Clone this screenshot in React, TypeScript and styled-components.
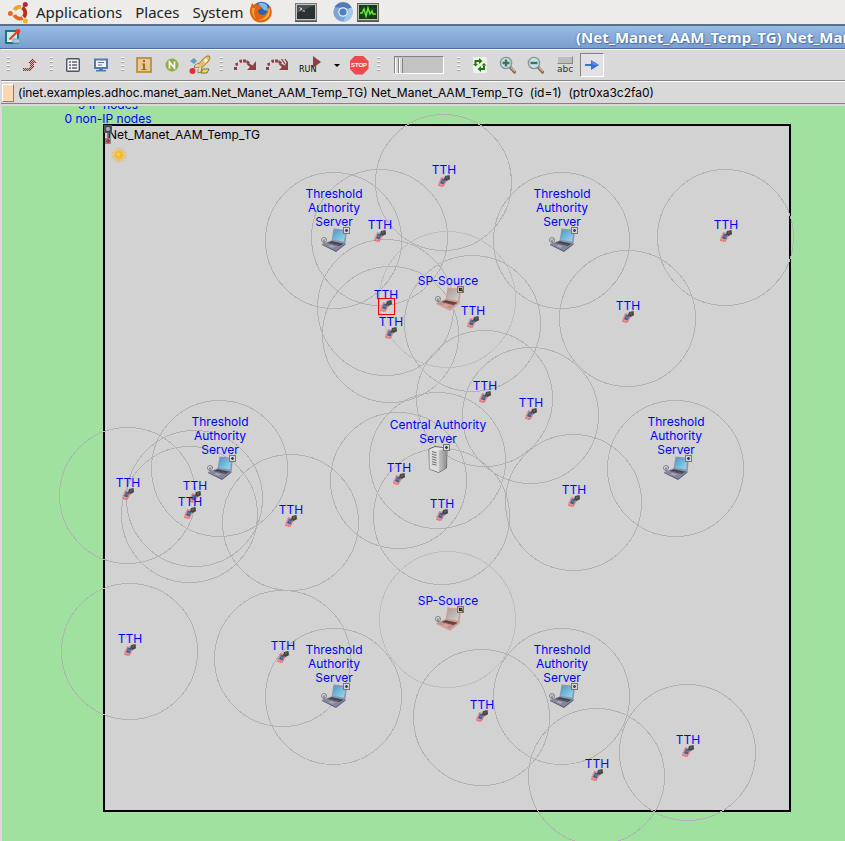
import React from "react";
import styled, { createGlobalStyle } from "styled-components";

const GlobalStyle = createGlobalStyle`
  * { box-sizing: border-box; }
  body { margin: 0; background: #d9d9d9; }
  button { font: inherit; color: inherit; border: 0; background: none; padding: 0; margin: 0; }
  svg { display: block; flex: none; }
`;

const Page = styled.div`
  min-height: 100vh;
  display: flex;
  flex-direction: column;
  font-family: Inter, "Liberation Sans", Arial, sans-serif;
  font-size: 12px;
  color: #000;
  overflow: hidden;
`;

const DesktopPanel = styled.nav`
  height: 24px;
  display: flex;
  align-items: center;
  padding-left: 7px;
  background: #edecea;
  font-family: "Noto Sans", sans-serif;
  font-size: 15px;
  line-height: 24px;
`;

const MenuButton = styled.button`
  display: flex;
  align-items: center;
  gap: 6px;
  margin-right: 13px;
  color: #222;
`;

const Launcher = styled.button<{ $gap: number }>`
  margin-left: ${(p) => p.$gap}px;
`;

const TitleBar = styled.header`
  height: 25px;
  display: flex;
  align-items: center;
  padding-left: 5px;
  border-top: 2px solid #5b7088;
  border-bottom: 1px solid #446ea5;
  background: linear-gradient(#98bae5, #799fce);
  overflow: hidden;
`;

const Title = styled.h1`
  flex: 1;
  margin: 0 0 0 555px;
  font-family: "Noto Sans", sans-serif;
  font-size: 15px;
  line-height: 22px;
  font-weight: 700;
  color: #fff;
  white-space: nowrap;
  text-shadow: 0 0 2px #3a649b, 1px 1px 1px #4d77ad;
`;

const Toolbar = styled.div`
  height: 32px;
  display: flex;
  align-items: center;
  margin-left: 1px;
  background: #d9d9d9;
  border-top: 1px solid #fff;
  border-bottom: 1px solid #828282;
`;

const Grip = styled.span`
  width: 15px;
  height: 16px;
  flex: none;
  display: flex;
  justify-content: center;
  &::before {
    content: "";
    width: 3px;
    background: repeating-linear-gradient(#fff 0 1px, #a3a3a3 1px 2px, #d9d9d9 2px 4px);
  }
`;

const ToolButton = styled.button<{ $width?: number; $active?: boolean }>`
  width: ${(p) => p.$width ?? 28}px;
  height: 24px;
  flex: none;
  display: flex;
  align-items: center;
  justify-content: center;
  border: ${(p) => (p.$active ? "1px solid" : "0")};
  border-color: #828282 #fff #fff #828282;
  background: ${(p) => (p.$active ? "#e1e1e3" : "none")};
`;

const Speed = styled.input`
  appearance: none;
  width: 50px;
  height: 18px;
  margin: 0 7px 0 8px;
  flex: none;
  background: #c3c3c3;
  border: 1px solid;
  border-color: #828282 #fff #fff #828282;
  &::-webkit-slider-thumb {
    appearance: none;
    width: 8px;
    height: 15px;
    background: linear-gradient(90deg, #fff 0 1px, #d9d9d9 1px 3px, #828282 3px 4px, #fff 4px 5px, #d9d9d9 5px 7px, #828282 7px);
  }
`;

const InfoBar = styled.div`
  height: 23px;
  display: flex;
  align-items: center;
  gap: 4px;
  margin-left: 1px;
  padding-left: 1px;
  background: #d9d9d9;
  border-top: 1px solid #fff;
  border-bottom: 1px solid #828282;
  line-height: 14px;
  white-space: pre;
`;

const Swatch = styled.button`
  width: 12px;
  height: 18px;
  flex: none;
  background: #ffd8b1;
  border: 1px solid;
  border-color: #fff #8c7b6a #8c7b6a #fff;
`;

const Canvas = styled.main`
  position: relative;
  flex: 1;
  min-height: 735px;
  margin: 2px 0 0 2px;
  background: #a0e1a0;
  overflow: hidden;
`;

const NodeCounts = styled.div`
  position: absolute;
  left: 46px;
  top: -8px;
  width: 120px;
  line-height: 14px;
  text-align: center;
  color: #00f;
`;

const Playground = styled.section`
  position: absolute;
  left: 101px;
  top: 18px;
  width: 688px;
  height: 688px;
  display: flex;
  flex-direction: column;
  gap: 5px;
  padding: 2px 3px;
  border: 2px solid #000;
  background: #d2d2d2;
  line-height: 14px;
`;

const Notifier = styled.div`
  padding-left: 3px;
`;

const ModuleMarks = styled.div`
  position: absolute;
  left: 101px;
  top: 18px;
`;

const Ranges = styled.svg`
  position: absolute;
  left: 0;
  top: 0;
  width: 100%;
  height: 100%;
  fill: none;
  stroke: #b2b2b2;
  shape-rendering: crispEdges;
`;

const NodeBox = styled.div<{ $x: number; $y: number }>`
  position: absolute;
  left: ${(p) => p.$x - 62}px;
  top: ${(p) => p.$y - 106}px;
  width: 120px;
  height: 0;
  display: flex;
  flex-direction: column;
  justify-content: flex-end;
  align-items: center;
`;

const NodeLabel = styled.span`
  flex: none;
  margin-bottom: -3px;
  line-height: 14px;
  text-align: center;
  color: #00f;
  white-space: pre;
`;

const Selection = styled.div`
  position: absolute;
  left: 376px;
  top: 192px;
  width: 17px;
  height: 17px;
  border: 1px solid #f00;
`;

type Kind = "tth" | "authority" | "source" | "central";
type NetNode = { x: number; y: number; kind: Kind };

const nodes: NetNode[] = [
  { x: 444, y: 182, kind: "tth" },
  { x: 380, y: 237, kind: "tth" },
  { x: 726, y: 237, kind: "tth" },
  { x: 386, y: 307, kind: "tth" },
  { x: 391, y: 334, kind: "tth" },
  { x: 473, y: 323, kind: "tth" },
  { x: 628, y: 318, kind: "tth" },
  { x: 485, y: 398, kind: "tth" },
  { x: 531, y: 415, kind: "tth" },
  { x: 399, y: 480, kind: "tth" },
  { x: 442, y: 516, kind: "tth" },
  { x: 574, y: 502, kind: "tth" },
  { x: 128, y: 495, kind: "tth" },
  { x: 195, y: 498, kind: "tth" },
  { x: 190, y: 514, kind: "tth" },
  { x: 291, y: 522, kind: "tth" },
  { x: 130, y: 651, kind: "tth" },
  { x: 283, y: 658, kind: "tth" },
  { x: 482, y: 717, kind: "tth" },
  { x: 688, y: 752, kind: "tth" },
  { x: 597, y: 776, kind: "tth" },
  { x: 334, y: 240, kind: "authority" },
  { x: 562, y: 240, kind: "authority" },
  { x: 220, y: 468, kind: "authority" },
  { x: 676, y: 468, kind: "authority" },
  { x: 334, y: 696, kind: "authority" },
  { x: 562, y: 696, kind: "authority" },
  { x: 448, y: 299, kind: "source" },
  { x: 448, y: 619, kind: "source" },
  { x: 438, y: 460, kind: "central" },
];

const labels: Record<Kind, string> = {
  tth: "TTH",
  authority: "Threshold\nAuthority\nServer",
  source: "SP-Source",
  central: "Central Authority\nServer",
};

const halfHeight: Record<Kind, number> = { tth: 8, authority: 14, source: 14, central: 17 };

const Phone = () => (
  <svg width="14" height="16" viewBox="0 0 14 16">
    <path d="M4.5 3 9.5 4 9.5 7 6 13 1 12 1.5 9.5Z" fill="#dd9a9c" />
    <path d="M1.5 11 6 12.5 9 7" stroke="#f2666a" strokeWidth="1.4" strokeDasharray="1.4 1" fill="none" />
    <path d="M4.5 3.5 1.5 10" stroke="#f2666a" strokeDasharray="1.4 1" />
    <path d="M4.8 4.5 8.5 5.5 6.5 10.5 3 9.2Z" fill="#416591" />
    <path d="M4.5 6.5 6.5 7.5" stroke="#6d91b8" />
    <path d="M8 2 12.5 1 13 5.2 9.5 7 7 5.5Z" fill="#444548" />
    <path d="M9 2.5H11V4.5H9Z" fill="#5f6063" />
  </svg>
);

const Badge = ({ x, y, dark }: { x: number; y: number; dark?: boolean }) => (
  <g shapeRendering="crispEdges">
    <rect x={x} y={y} width="7" height="7" fill="#777" />
    <rect x={x + 1} y={y + 1} width="5" height="5" fill={dark ? "#b9b99a" : "#d4d4d4"} />
    <rect x={x + 2} y={y + 2} width="3" height="3" fill={dark ? "#24240c" : "#9a9ab0"} />
    {dark ? (
      <path d={`M${x + 3} ${y + 3}h3v3h-1v-2h-2z`} fill="#6d6d20" />
    ) : (
      <path d={`M${x + 3} ${y + 2}h1v1h1v1h-1v1h-1v-1h-1v-1h1z`} fill="#3c3c6e" />
    )}
  </g>
);

const Laptop = ({ pink }: { pink?: boolean }) => {
  const id = pink ? "screenPink" : "screenBlue";
  return (
    <svg width="36" height="28" viewBox="-4 0 36 28">
      <defs>
        <linearGradient id={id} x1="0" y1="0" x2="1" y2="1">
          <stop offset="0" stopColor={pink ? "#ab9d9b" : "#439bc8"} />
          <stop offset="1" stopColor={pink ? "#d5d0cb" : "#a4daf0"} />
        </linearGradient>
      </defs>
      <path d="M13.5 2.5 27 4 25.5 17.5 11.5 15Z" fill={pink ? "#d19a90" : "#8b95b3"} />
      <path d="M14.5 4 25.5 5.2 24 15.5 12.7 13.7Z" fill={`url(#${id})`} />
      <path d="M2 18 11.5 14.5 25.5 17.5 16 24.5Z" fill={pink ? "#c4938b" : "#84869a"} />
      <path d="M7.5 17 11.5 15.3 23.5 17.7 19.5 20Z" fill={pink ? "#54403e" : "#41414d"} />
      <path d="M9 16.9 20.5 19" stroke={pink ? "#7c5c58" : "#686a7c"} strokeWidth=".6" />
      <path d="M8 20.2 11 19 15 20.2 12.5 21.8Z" fill={pink ? "#d8aaa4" : "#a7a9bb"} />
      <path d="M2 18V19L16 26 25.5 18.5V17.3L16 24.5Z" fill={pink ? "#d5a29b" : "#5b5d78"} />
      <circle cx="4" cy="14" r="2.5" fill="#dcdcdc" stroke="#777" strokeWidth=".9" />
      <path d="M3 13.7 4 14.5 5.5 13.3M4 14.5V16.5" stroke="#555" strokeWidth=".8" fill="none" />
      <Badge x={23} y={1} dark={pink} />
    </svg>
  );
};

const Tower = () => (
  <svg width="28" height="34" viewBox="0 0 28 34">
    <defs>
      <linearGradient id="tower">
        <stop offset="0" stopColor="#c4c4c4" />
        <stop offset="1" stopColor="#909090" />
      </linearGradient>
    </defs>
    <path d="M5 6 11 3.5 23 5 22.5 25 14.5 29.5 5.5 26Z" fill="#e4e4e4" stroke="#666" />
    <path d="M14.5 7.5 22.5 5.5 22 25 14.5 29Z" fill="url(#tower)" />
    <path d="M5.5 6.5 14.5 8V29L5.5 26Z" fill="#dcdcdc" />
    <path
      d="M8 8.5 12.5 10M8 11 12.5 12.5M8 13.5 12.5 15M8 16 12.5 17.5M8 18.5 12.5 20M8 21 12.5 22"
      stroke="#777"
      strokeWidth="1.2"
    />
    <Badge x={19} y={1} />
  </svg>
);

const glyphs: Record<Kind, React.ReactNode> = {
  tth: <Phone />,
  authority: <Laptop />,
  source: <Laptop pink />,
  central: <Tower />,
};

const Sun = () => (
  <svg width="16" height="16" viewBox="0 0 16 16">
    <path
      d="M8 0V16M0 8H16M2.3 2.3 13.7 13.7M13.7 2.3 2.3 13.7M5 .8 11 15.2M11 .8 5 15.2M.8 5 15.2 11M15.2 5 .8 11"
      stroke="#eeb640"
      strokeWidth=".9"
    />
    <circle cx="8" cy="8" r="4.6" fill="#d9c79a" />
    <circle cx="8" cy="8" r="3.8" fill="#ffb90c" />
    <circle cx="7.5" cy="7.5" r="1.8" fill="#ffd548" />
  </svg>
);

const Ubuntu = () => (
  <svg width="23" height="23" viewBox="0 0 23 23">
    <g fill="none" strokeWidth="3.8">
      <path d="M7.4 9A6 6 0 0 1 14 6.2" stroke="#f0a02c" />
      <path d="M15.2 6.6A6 6 0 0 1 16.6 16" stroke="#b83216" />
      <path d="M15.6 16.8A6 6 0 0 1 7.3 14" stroke="#e8651e" />
    </g>
    <circle cx="18.3" cy="3.6" r="2.5" fill="#b02a3c" />
    <circle cx="3.4" cy="12.4" r="2.5" fill="#ea6a25" />
    <circle cx="18.4" cy="20" r="2.5" fill="#f3b12d" />
  </svg>
);

const Firefox = () => (
  <svg width="24" height="24" viewBox="0 0 24 24">
    <circle cx="12.5" cy="11.5" r="9.8" fill="#2c63ae" />
    <path d="M9 4Q13 1 18 5L19 11 15 10Z" fill="#80b8e6" />
    <path
      d="M3 3 5 5Q9 3 11 6L13 8 9 10Q9 15 14 15 18 14 19 9L21 6Q25 14 20 19 14 25 6 21 0 16 1 9Z"
      fill="#e2660f"
    />
    <path d="M20 7Q22 12 19 17 15 21 9 20 16 19 19 13Z" fill="#f7bb38" />
    <path d="M3 8Q2 15 7 19 4 14 6 8Z" fill="#f3a02d" />
  </svg>
);

const Terminal = () => (
  <svg width="22" height="19" viewBox="0 0 22 19">
    <rect x=".5" y=".5" width="21" height="17" fill="#c8c8c3" stroke="#777" />
    <rect x="2" y="2" width="18" height="14" fill="#2c3233" />
    <path d="M2 2H20L2 10Z" fill="#495152" />
    <path d="M4.5 4.5 7 6 4.5 7.5M7.5 8H10" stroke="#eee" strokeWidth=".9" fill="none" />
    <path d="M0 18.5H22" stroke="#555" />
  </svg>
);

const Chromium = () => (
  <svg width="20" height="20" viewBox="0 0 20 20">
    <circle cx="10" cy="10" r="9.7" fill="#7ca6d6" />
    <path d="M1.6 5A9.7 9.7 0 0 1 19 6.4L10 6Z" fill="#4f7cb8" />
    <path d="M10 20 14 12 16 6H19A10 10 0 0 1 10 20Z" fill="#a7c7ea" />
    <circle cx="10" cy="10" r="4.8" fill="#e8eef7" />
    <circle cx="10" cy="10" r="3.6" fill="#4d80c0" />
  </svg>
);

const Monitor = () => (
  <svg width="22" height="19" viewBox="0 0 22 19">
    <rect x=".5" y=".5" width="21" height="17" fill="#bdbdb7" stroke="#666" />
    <rect x="2" y="2" width="18" height="14" fill="#153a13" />
    <path d="M2 6H20M2 11H20M6 2V16M11 2V16M16 2V16" stroke="#2c5a28" strokeWidth=".6" />
    <path d="M3 10H5L7 6 9 13 11 5 13 11 15 8 16 11H19" stroke="#5fe83f" strokeWidth="1.5" fill="none" />
    <path d="M0 18.5H22" stroke="#555" />
  </svg>
);

const WindowIcon = () => (
  <svg width="16" height="16" viewBox="0 0 16 16">
    <path d="M1 2H13V14H1Z" fill="#d6e6e6" stroke="#167878" strokeWidth="2" />
    <path d="M4 13 6 8 8 10Z" fill="#fff" />
    <path d="M4.5 10.5 12 3" stroke="#ee3a1c" strokeWidth="2.2" />
    <circle cx="13" cy="2.4" r="2.3" fill="#f03a1c" />
    <path d="M8 10H15V14H8Z" fill="#a8c8dc" stroke="#74a1bd" />
  </svg>
);

const ParentIcon = () => (
  <svg width="14" height="14" viewBox="0 0 14 14">
    <defs>
      <pattern id="dither" width="2" height="2" patternUnits="userSpaceOnUse">
        <path d="M0 0H2V2H0Z" fill="#d3b4b4" />
        <path d="M0 0H1V1H0ZM1 1H2V2H1Z" fill="#962f32" />
      </pattern>
    </defs>
    <path d="M0 13V10H5L7 8V5H4L9 0 14 5H11V9L7 13Z" fill="url(#dither)" shapeRendering="crispEdges" />
  </svg>
);

const ListIcon = () => (
  <svg width="14" height="14" viewBox="0 0 14 14">
    <rect x=".7" y=".7" width="12.6" height="12.6" rx="1" fill="#f4f6fa" stroke="#4c5566" strokeWidth="1.4" />
    <path d="M3 4H5M3 7H5M3 10H5M6 4H11M6 7H11M6 10H11" stroke="#111827" strokeWidth="1.2" />
  </svg>
);

const ScreenIcon = () => (
  <svg width="14" height="14" viewBox="0 0 14 14">
    <rect x="1" y="1.5" width="12" height="8.5" fill="#f2f6fc" stroke="#5379b2" strokeWidth="2" />
    <path d="M4 4.5H10M4 7H8" stroke="#5379b2" />
    <path d="M5 10H9V12H12V13.5H2V12H5Z" fill="#5379b2" />
  </svg>
);

const InfoIcon = () => (
  <svg width="16" height="16" viewBox="0 0 16 16">
    <rect x="1" y="1" width="14" height="14" fill="#e5c99a" stroke="#b98538" strokeWidth="1.6" />
    <path d="M7 3H9V5H7ZM6 6.5H9V12H10.5V13H5.5V12H7V7.5H6Z" fill="#a56a12" />
  </svg>
);

const NedIcon = () => (
  <svg width="14" height="14" viewBox="0 0 14 14">
    <circle cx="7" cy="7" r="6.5" fill="#8fae49" />
    <path d="M4.5 10.5V4L9.5 10V3.5" stroke="#fff" strokeWidth="1.6" fill="none" />
  </svg>
);

const RocketIcon = () => (
  <svg width="22" height="20" viewBox="0 0 22 20">
    <path d="M5 3 8 6 5 9 1 6Z" fill="#6b9cba" />
    <path d="M18 1Q21 0 21 3L19 7 11 14 8 11 14 4Z" fill="#e9bd69" stroke="#8f6b2b" strokeWidth=".8" />
    <path d="M15 5 17 3 19 5 16 8Z" fill="#fff6d3" />
    <path d="M10 8 6 10 5 13 9 12M13 12 12 17 9 18 9 14" fill="#efe3b8" stroke="#765721" strokeWidth=".7" />
    <circle cx="3.5" cy="16" r="3" fill="#e42c38" />
    <path d="M14 14H20L18 18H12Z" fill="#eee33b" stroke="#555" strokeWidth=".8" />
  </svg>
);

const StepIcon = ({ twice }: { twice?: boolean }) => (
  <svg width="22" height="12" viewBox="0 0 22 12">
    <g fill="#8d4146">
      <path d="M0 8H3V11H0ZM1 4.5 4 3.5V6.5L2 7ZM5 1 8 .5V3.5L6 4ZM9 .5H12V3.5H9ZM13 1 16 3.5 14 5.5 12 3.5Z" />
      <path d="M22 2V11H13L16 8 13 5.5 14.5 4 18.5 6.5Z" />
      {twice && <path d="M15.5 0 19 5M19 0 21.5 4" stroke="#8d4146" strokeWidth="1.3" />}
    </g>
  </svg>
);

const RunFace = styled.span`
  width: 22px;
  height: 18px;
  display: flex;
  align-items: flex-end;
  font-family: "DejaVu Sans", sans-serif;
  font-size: 8px;
  line-height: 8px;
  svg { align-self: flex-start; margin-left: -3px; }
`;

const StopFace = styled.span`
  width: 19px;
  height: 19px;
  flex: none;
  font-family: "Liberation Sans", Arial, sans-serif;
  font-size: 6px;
  line-height: 19px;
  font-weight: 700;
  text-align: center;
  color: #fff;
  background: #ed4a4d;
  clip-path: polygon(30% 0, 70% 0, 100% 30%, 100% 70%, 70% 100%, 30% 100%, 0 70%, 0 30%);
`;

const LabelFace = styled.span`
  display: flex;
  flex-direction: column;
  align-items: center;
  font-family: "DejaVu Sans", sans-serif;
  font-size: 9px;
  line-height: 11px;
  color: #333;
  &::before {
    content: "";
    width: 14px;
    height: 6px;
    background: #bcbcbc;
    border: 1px solid;
    border-color: #ddd #888 #888 #ddd;
  }
`;

const RedrawIcon = () => (
  <svg width="14" height="16" viewBox="0 0 14 16">
    <rect width="14" height="16" rx="1" fill="#f1f2ef" />
    <path d="M2.5 7.5V4H7M11 8.5V12H7" stroke="#207a0b" strokeWidth="2" fill="none" />
    <path d="M6 1 9.5 4 6 7ZM8 9 4.5 12 8 15Z" fill="#207a0b" />
    <path d="M8.5 8.5H13.5L11 6ZM0 7H5L2.5 9.5Z" fill="#207a0b" />
  </svg>
);

const ZoomIcon = ({ plus }: { plus?: boolean }) => (
  <svg width="18" height="18" viewBox="0 0 18 18">
    <path d="M10.5 10.5 15.5 16" stroke="#87694e" strokeWidth="3.2" strokeLinecap="round" />
    <path d="M12 11.5 16 15.5" stroke="#d9b696" strokeWidth="1.3" />
    <circle cx="7" cy="7" r="5.6" fill="#c7e1ec" stroke="#83969f" strokeWidth="1.4" />
    <path d={plus ? "M3.5 7H10.5M7 3.5V10.5" : "M3.5 7H10.5"} stroke="#3d7a4b" strokeWidth="2.4" />
  </svg>
);

const ArrowIcon = () => (
  <svg width="14" height="10" viewBox="0 0 14 10">
    <path d="M0 4H6V0L14 5 6 10V6H0Z" fill="#3970d6" />
    <path d="M6 0 14 5H8Z" fill="#5a8be6" />
  </svg>
);

export default function App() {
  return (
    <Page>
      <GlobalStyle />
      <DesktopPanel>
        <MenuButton>
          <Ubuntu />
          Applications
        </MenuButton>
        <MenuButton>Places</MenuButton>
        <MenuButton>System</MenuButton>
        <Launcher $gap={-7} aria-label="Firefox"><Firefox /></Launcher>
        <Launcher $gap={22} aria-label="Terminal"><Terminal /></Launcher>
        <Launcher $gap={16} aria-label="Chromium"><Chromium /></Launcher>
        <Launcher $gap={4} aria-label="System Monitor"><Monitor /></Launcher>
      </DesktopPanel>
      <TitleBar>
        <WindowIcon />
        <Title>(Net_Manet_AAM_Temp_TG) Net_Manet_AAM_Temp_TG</Title>
      </TitleBar>
      <Toolbar role="toolbar">
        <Grip />
        <ToolButton aria-label="Go to parent module"><ParentIcon /></ToolButton>
        <Grip />
        <ToolButton aria-label="Module output"><ListIcon /></ToolButton>
        <ToolButton aria-label="Graphical view"><ScreenIcon /></ToolButton>
        <Grip />
        <ToolButton aria-label="Inspect"><InfoIcon /></ToolButton>
        <ToolButton aria-label="NED source"><NedIcon /></ToolButton>
        <ToolButton aria-label="Find objects"><RocketIcon /></ToolButton>
        <Grip />
        <ToolButton $width={32} aria-label="Step"><StepIcon /></ToolButton>
        <ToolButton $width={32} aria-label="Step in module"><StepIcon twice /></ToolButton>
        <ToolButton $width={34} aria-label="Run">
          <RunFace>
            RUN
            <svg width="8" height="12" viewBox="0 0 8 12">
              <path d="M0 0 8 6 0 12Z" fill="#8d4146" />
            </svg>
          </RunFace>
        </ToolButton>
        <ToolButton $width={20} aria-label="Run options">
          <svg width="6" height="3" viewBox="0 0 6 3"><path d="M0 0H6L3 3Z" /></svg>
        </ToolButton>
        <ToolButton $width={24} aria-label="Stop"><StopFace>STOP</StopFace></ToolButton>
        <Grip />
        <Speed type="range" aria-label="Animation speed" defaultValue={0} />
        <Grip />
        <ToolButton aria-label="Redraw"><RedrawIcon /></ToolButton>
        <ToolButton aria-label="Zoom in"><ZoomIcon plus /></ToolButton>
        <ToolButton aria-label="Zoom out"><ZoomIcon /></ToolButton>
        <ToolButton $width={30} aria-label="Show labels"><LabelFace>abc</LabelFace></ToolButton>
        <ToolButton $width={24} $active aria-label="Show arrows"><ArrowIcon /></ToolButton>
      </Toolbar>
      <InfoBar>
        <Swatch aria-label="Module color" />
        {"(inet.examples.adhoc.manet_aam.Net_Manet_AAM_Temp_TG) Net_Manet_AAM_Temp_TG  (id=1)  (ptr0xa3c2fa0)"}
      </InfoBar>
      <Canvas>
        <NodeCounts>
          9 IP nodes
          <br />0 non-IP nodes
        </NodeCounts>
        <Playground>
          Net_Manet_AAM_Temp_TG
          <Notifier><Sun /></Notifier>
        </Playground>
        <Ranges>
          {nodes.map((n, i) => (
            <circle
              key={i}
              cx={n.x - 2.5}
              cy={n.y - 105.5}
              r="68"
              stroke={n.kind === "source" ? "#bebebe" : undefined}
            />
          ))}
        </Ranges>
        <ModuleMarks>
          <svg width="9" height="20" viewBox="0 0 9 20">
            <rect x="1" y="1" width="8" height="8" fill="#555" />
            <circle cx="5" cy="5" r="2.8" fill="#a5a5bd" stroke="#33334a" />
            <rect x="2" y="14" width="6" height="6" fill="#888" />
            <path d="M5 9V14" stroke="#222" />
            <path d="M5 15V19M3 17H7" stroke="#b52a34" strokeWidth="1.6" />
          </svg>
        </ModuleMarks>
        {nodes.map((n, i) => (
          <NodeBox key={i} $x={n.x} $y={n.y + halfHeight[n.kind]}>
            <NodeLabel>{labels[n.kind]}</NodeLabel>
            {glyphs[n.kind]}
          </NodeBox>
        ))}
        <Selection />
      </Canvas>
    </Page>
  );
}
